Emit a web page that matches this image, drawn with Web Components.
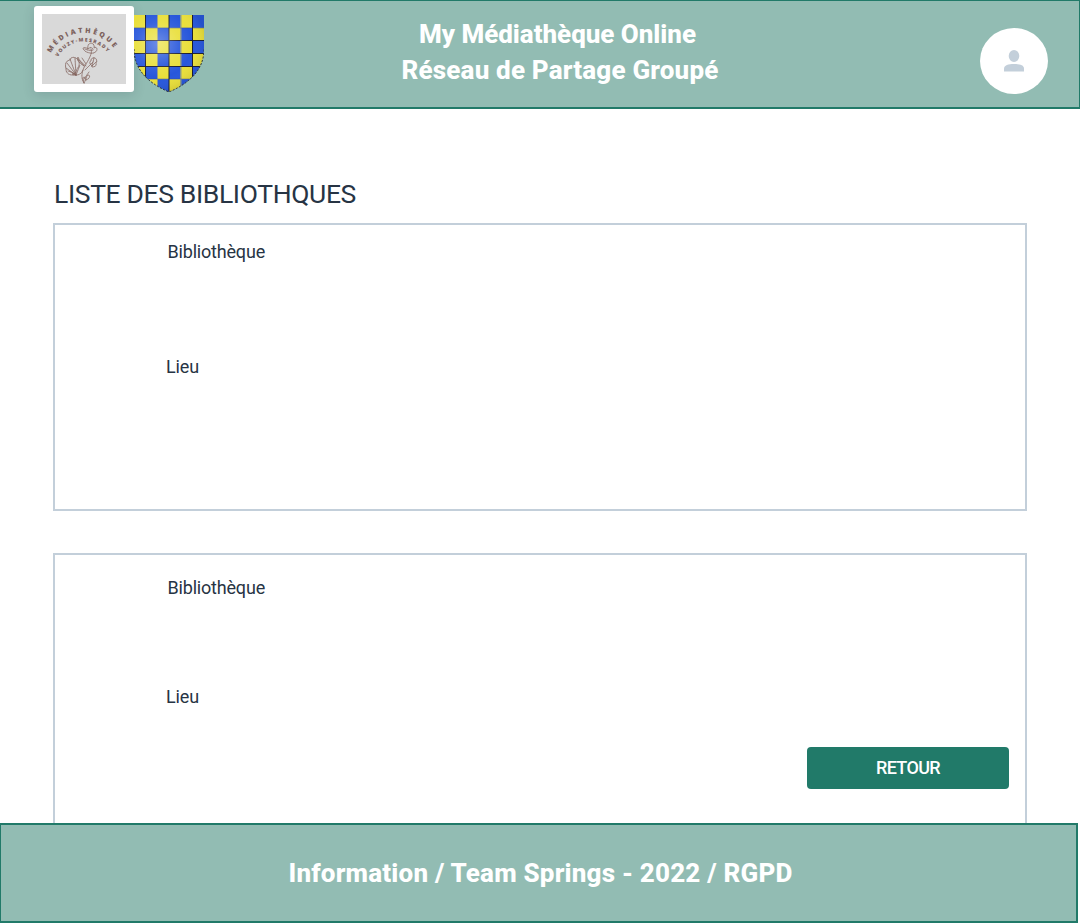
<!DOCTYPE html>
<html lang="fr">
<head>
<meta charset="utf-8">
<title>My Médiathèque Online</title>
<style>
body{margin:0;background:#fff;color:#273444;font-family:Roboto,"Open Sans",sans-serif}
</style>
</head>
<body>
<library-page></library-page>
<script>
function define(name, html, ready){
  customElements.define(name, class extends HTMLElement{
    constructor(){super();this.attachShadow({mode:'open'}).innerHTML=html;}
    connectedCallback(){if(ready)ready(this);}
  });
}

// A single line of text whose tracking is adjusted to fill the given width.
define('fit-text', `<style>:host{display:block;white-space:nowrap}span{display:inline-block}</style><span><slot></slot></span>`, el=>{
  const s=el.shadowRoot.querySelector('span');
  const extra=(+el.getAttribute('width')-s.getBoundingClientRect().width)/el.textContent.length;
  s.style.letterSpacing=extra+'px';
  el.style.width=el.getAttribute('width')+'px';
});

define('mediatheque-logo', `<style>
:host{display:block;box-sizing:border-box;width:100px;height:86px;padding:8px;background:#fff;border-radius:3px;box-shadow:0 3px 12px rgba(39,52,68,.16)}
svg{display:block;background:#d9d9d9}
text{font-family:"Open Sans",sans-serif;fill:#7d625e}
</style>
<svg width="84" height="70" viewBox="42 14 84 70">
<defs><path id="outer" d="M51 53A37 37 0 0 1 117 53"/><path id="inner" d="M58 57A30 30 0 0 1 110 56"/></defs>
<text font-size="7"><textPath href="#outer" textLength="75">MÉDIATHÈQUE</textPath></text>
<text font-size="5"><textPath href="#inner" textLength="58">VOUZY-MESRADY</textPath></text>
<g fill="none" stroke="#79544e" stroke-width=".7" stroke-linecap="round" stroke-linejoin="round" stroke-dasharray="2.2 .5" opacity=".9">
<path d="M84 83Q79 75 86 64T91 49M78 59l6 7M82 58l4 6M76 75q5 0 7-5M85 70l8-8M84 79l5-7"/>
<path d="M76 75Q66 76 66 69Q64 61 70 60Q71 56 76 58Q82 63 77 69Q76 74 72 74ZM76 75L66 68M76 75L67 63M76 75L70 59M76 75L75 58M76 75L80 65M68 71q4 1 8 4"/>
<path d="M90 53Q84 52 83 48Q86 47 88 49Q87 44 91 43Q95 44 94 48Q97 46 97 50Q95 54 90 53ZM88 49q3-3 5 0M85 49q4 2 8 1"/>
<path d="M92 66Q88 62 91 61Q91 57 95 58Q98 60 96 63Q97 67 92 67ZM92 66l2-8M92 66l4-4"/>
<path d="M84 83Q82 77 84 77Q87 78 84 83ZM86 80Q86 75 89 75Q91 78 86 80ZM86 66q-6-4-8-9q-2 4 6 9"/>
</g></svg>`);

let squares='';
for(let r=0;r<6;r++)for(let c=0;c<6;c++)
  squares+=`<rect x="${c*70/6}" y="${r*77/6}" width="11.8" height="13" fill="${(r+c)%2?'#2857db':'#e9df3b'}"/>`;
define('city-shield', `<style>:host{display:block;width:70px;height:77px}svg{display:block}</style>
<svg width="70" height="77" viewBox="0 0 70 77"><defs>
<clipPath id="shape"><path d="M0 0H70V34Q70 62 35 77Q0 62 0 34Z"/></clipPath>
<radialGradient id="shine" gradientUnits="userSpaceOnUse" cx="24" cy="29" r="48"><stop stop-color="#fff" stop-opacity=".32"/><stop offset=".45" stop-color="#fff" stop-opacity=".08"/><stop offset=".7" stop-color="#fff" stop-opacity="0"/><stop offset="1" stop-opacity=".08"/></radialGradient></defs>
<g clip-path="url(#shape)">${squares}
<path d="M23.5 0V77M47 0V77" stroke="#939b83"/>
<path d="M0 13H70M0 64H70" stroke="#35458a" stroke-width=".4"/>
<path d="M11.5 0V77M35 0V77M58.5 0V77M0 25.5H70M0 38.5H70M0 51.5H70" stroke="#16172b" stroke-width=".95"/>
<rect width="70" height="77" fill="url(#shine)"/></g>
<path d="M0 34Q0 62 35 77Q70 62 70 34" fill="none" stroke="#272b35" stroke-dasharray="2 1.5"/></svg>`);

define('user-avatar', `<style>:host{display:grid;place-items:center;width:68px;height:66px;border-radius:50%;background:#fff}svg{display:block}</style>
<svg width="20" height="22" viewBox="0 0 20 22"><ellipse cx="10" cy="6" rx="5.3" ry="6" fill="#c3cfda"/><path d="M0 21.5V18.6C0 15 4.4 13.9 10 13.9S20 15 20 18.6V21.5Z" fill="#c3cfda"/></svg>`);

define('page-header', `<style>
:host{display:flex;box-sizing:border-box;height:109px;background:#92bcb3;border:solid #217a69;border-width:1px 1px 2px 0;color:#fff;font-size:26px;font-weight:800;line-height:36px}
mediatheque-logo{margin:5px 0 0 34px}city-shield{margin-top:14px}
.title{display:flex;flex-direction:column;align-items:center;width:320px;margin:15px 0 0 196px}
.title :first-child{margin-right:5px}
user-avatar{margin:27px 31px 0 auto}
</style><mediatheque-logo></mediatheque-logo><city-shield></city-shield>
<div class="title"><fit-text width="277">My Médiathèque Online</fit-text><fit-text width="317">Réseau de Partage Groupé</fit-text></div><user-avatar></user-avatar>`);

define('library-card', `<style>
:host{display:flex;flex-direction:column;box-sizing:border-box;height:288px;border:2px solid #c3cfda;padding:var(--top) 16px 0 111px;font-size:18px;line-height:24px}
.name{margin-left:1.5px}.place{margin-top:var(--gap)}
</style><fit-text class="name" width="97.5">Bibliothèque</fit-text><fit-text class="place" width="33">Lieu</fit-text><slot></slot>`);

define('action-button', `<style>
:host{display:block;align-self:flex-end;margin-top:38px}
button{display:flex;align-items:center;justify-content:center;width:202px;height:42px;padding:0;border:0;border-radius:4px;background:#217a69;color:#fff;font:500 18px/24px Roboto,sans-serif}
</style><button><fit-text width="64"><slot></slot></fit-text></button>`, el=>{
  const t=el.shadowRoot.querySelector('fit-text');
  const label=el.textContent;
  t.textContent=label;
  const s=t.shadowRoot.querySelector('span');
  s.style.letterSpacing='0px';
  s.style.letterSpacing=(64-s.getBoundingClientRect().width)/label.length+'px';
});

define('page-footer', `<style>
:host{display:flex;align-items:center;justify-content:center;box-sizing:border-box;width:1078px;height:100px;background:#92bcb3;border:2px solid #217a69;border-left-width:1px;color:#fff;font-size:26px;font-weight:800;line-height:36px}
fit-text{margin-left:4px}
</style><fit-text width="504">Information / Team Springs - 2022 / RGPD</fit-text>`);

define('library-page', `<style>
:host{display:flex;flex-direction:column;height:924px;overflow:hidden}
main{flex:none;box-sizing:border-box;height:714px;padding:67px 53px 0;overflow:hidden}
h1{margin:0 0 11px 1px;font-size:26.5px;line-height:36px;font-weight:400}
library-card{--top:15px;--gap:91px}
library-card+library-card{margin-top:42px;--top:21px;--gap:85px}
</style><page-header></page-header><main><h1><fit-text width="302">LISTE DES BIBLIOTHQUES</fit-text></h1>
<library-card></library-card><library-card><action-button>RETOUR</action-button></library-card></main><page-footer></page-footer>`);
</script>
</body>
</html>
